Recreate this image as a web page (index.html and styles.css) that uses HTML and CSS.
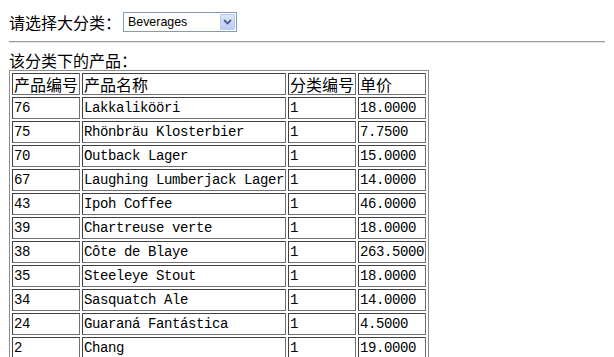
FILE: index.html
```
<!DOCTYPE html>
<html lang="zh">
<head>
<meta charset="utf-8">
<title>产品</title>
<link rel="stylesheet" href="styles.css">
</head>
<body>
<div class="filter">
  <span class="label">请选择大分类：</span>
  <div class="select">
    <span class="value">Beverages</span>
    <span class="btn"><svg width="9" height="6" viewBox="0 0 9 6"><path d="M1 1 L4.5 4.5 L8 1" fill="none" stroke="#4d6185" stroke-width="1.8"/></svg></span>
  </div>
</div>
<hr class="rule">
<div class="caption">该分类下的产品：</div>
<table class="products">
  <tr class="head"><td>产品编号</td><td>产品名称</td><td>分类编号</td><td>单价</td></tr>
  <tr><td>76</td><td>Lakkalikööri</td><td>1</td><td>18.0000</td></tr>
  <tr><td>75</td><td>Rhönbräu Klosterbier</td><td>1</td><td>7.7500</td></tr>
  <tr><td>70</td><td>Outback Lager</td><td>1</td><td>15.0000</td></tr>
  <tr><td>67</td><td>Laughing Lumberjack Lager</td><td>1</td><td>14.0000</td></tr>
  <tr><td>43</td><td>Ipoh Coffee</td><td>1</td><td>46.0000</td></tr>
  <tr><td>39</td><td>Chartreuse verte</td><td>1</td><td>18.0000</td></tr>
  <tr><td>38</td><td>Côte de Blaye</td><td>1</td><td>263.5000</td></tr>
  <tr><td>35</td><td>Steeleye Stout</td><td>1</td><td>18.0000</td></tr>
  <tr><td>34</td><td>Sasquatch Ale</td><td>1</td><td>14.0000</td></tr>
  <tr><td>24</td><td>Guaraná Fantástica</td><td>1</td><td>4.5000</td></tr>
  <tr><td>2</td><td>Chang</td><td>1</td><td>19.0000</td></tr>
</table>
</body>
</html>
```
FILE: styles.css
```
html, body {
  background: #ffffff;
}
body {
  margin: 8px 9px 8px 9px;
  font-family: "Noto Sans CJK SC", "Noto Sans", sans-serif;
  font-size: 16px;
  color: #000;
}
.filter {
  display: flex;
  align-items: flex-start;
  height: 25px;
  padding-top: 4px;
  box-sizing: border-box;
}
.label {
  line-height: 20px;
  white-space: nowrap;
}
.select {
  display: flex;
  align-items: center;
  box-sizing: border-box;
  width: 114px;
  height: 20px;
  margin-left: 2px;
  border: 1px solid #7f9db9;
  background: #fff;
  padding: 1px;
}
.value {
  flex: 1;
  font-family: "Liberation Sans", Arial, sans-serif;
  font-size: 12.4px;
  line-height: 16px;
  padding-left: 3px;
  color: #000;
}
.btn {
  display: flex;
  align-items: center;
  justify-content: center;
  width: 15px;
  height: 16px;
  box-sizing: border-box;
  border: 1px solid #b9cbf3;
  border-radius: 1px;
  background: linear-gradient(#dbe5fc, #bccdf5);
}
.rule {
  margin: 8px 0;
  height: 0;
  border: 0;
  border-top: 1px solid #9a9a9a;
  border-bottom: 1px solid #e4e4e4;
}
.caption {
  line-height: 19px;
  height: 19px;
}
.products {
  border: 1px solid #8c8c8c;
  border-spacing: 2px;
  font-family: "Liberation Mono", monospace;
  font-size: 14px;
  letter-spacing: -0.4px;
}
.products td {
  border: 1px solid;
  border-color: #404040 #707070 #707070 #404040;
  padding: 1px;
  line-height: 18px;
  height: 18px;
  white-space: nowrap;
  vertical-align: middle;
}
.products .head td {
  font-family: "Noto Sans CJK SC", sans-serif;
  font-size: 16px;
  letter-spacing: 0;
}
```
